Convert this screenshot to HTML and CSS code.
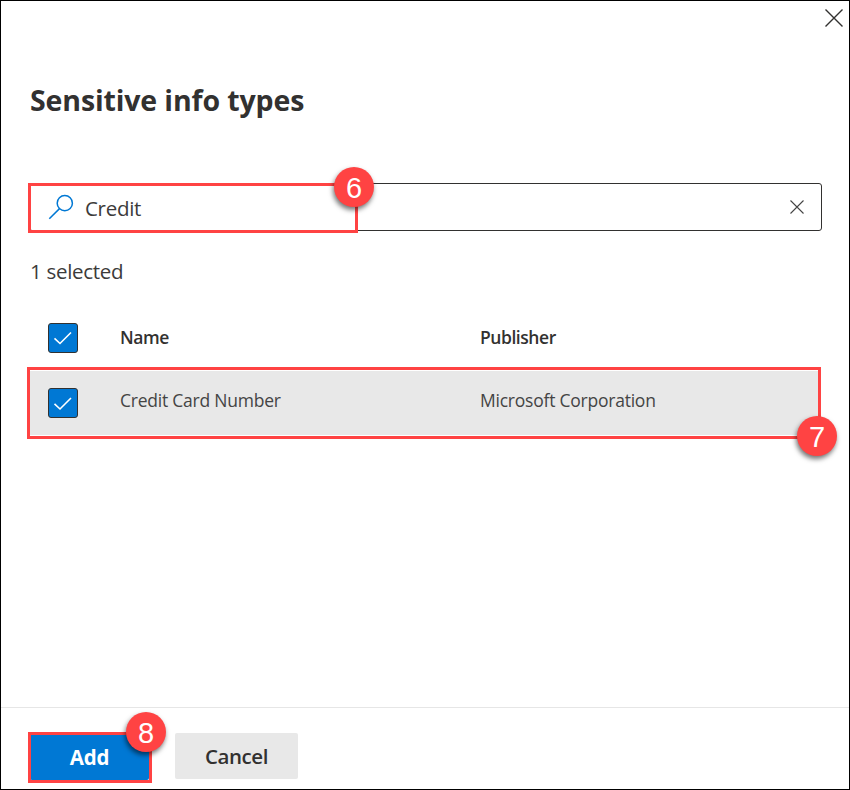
FILE: index.html
```html
<!DOCTYPE html>
<html lang="en">
<head>
<meta charset="utf-8">
<title>Sensitive info types</title>
<link rel="stylesheet" href="styles.css">
</head>
<body>
<main class="panel">
  <header class="panel-top">
    <button class="icon-button" aria-label="Close"><svg width="20" height="20" viewBox="0 0 20 20"><path d="M1.5 1.5 18.5 18.5M18.5 1.5 1.5 18.5" fill="none" stroke="#323130" stroke-width="1.4"/></svg></button>
  </header>
  <h1 class="title"><span>Sensitive info types</span></h1>
  <div class="search">
    <svg class="search-icon" width="26" height="26" viewBox="0 0 26 26"><g fill="none" stroke="#0078d4" stroke-width="1.5"><circle cx="16.8" cy="9.2" r="7.6"/><path d="M11.5 14.6 1.3 24.8"/></g></svg>
    <span class="query">Credit</span>
    <svg class="clear" width="14" height="14" viewBox="0 0 14 14"><path d="M.5.5 13.5 13.5M13.5.5.5 13.5" fill="none" stroke="#444" stroke-width="1.1"/></svg>
    <div class="mark mark-search"><b class="badge badge-6">6</b></div>
  </div>
  <p class="count"><span>1 selected</span></p>
  <section class="table">
    <div class="row head">
      <span class="check"><svg width="28" height="28" viewBox="0 0 28 28"><path d="M5.5 14.3 11 19.5 22 8.5" fill="none" stroke="#fff" stroke-width="1.6"/></svg></span>
      <span class="h-name">Name</span><span class="h-pub">Publisher</span>
    </div>
    <div class="row item">
      <span class="check"><svg width="28" height="28" viewBox="0 0 28 28"><path d="M5.5 14.8 11 20 22 9" fill="none" stroke="#fff" stroke-width="1.6"/></svg></span>
      <span class="c-name">Credit Card Number</span><span class="c-pub">Microsoft Corporation</span>
      <div class="mark mark-row"><b class="badge badge-7">7</b></div>
    </div>
  </section>
  <footer class="footer">
    <div class="add-wrap">
      <button class="button add">Add</button>
      <div class="mark mark-add"><b class="badge badge-8">8</b></div>
    </div>
    <button class="button cancel">Cancel</button>
  </footer>
</main>
</body>
</html>
```
FILE: styles.css
```css
* { box-sizing: border-box; }
body { margin: 0; background: #fff; color: #323130; font-family: "Open Sans", "Noto Sans", sans-serif; }
.panel { width: 850px; height: 790px; border: 1px solid #000; display: flex; flex-direction: column; overflow: hidden; }
.panel-top { height: 34px; padding: 7px 5px 0 0; display: flex; justify-content: flex-end; align-items: flex-start; }
.icon-button { border: 0; padding: 0; background: none; width: 20px; height: 20px; }
.icon-button svg, .check svg { display: block; }
.title { margin: 44px 0 0 29px; height: 42px; font-size: 28.5px; line-height: 42px; letter-spacing: -.13px; font-weight: 700; white-space: nowrap; }
.search { position: relative; margin: 62px 27px 0 28px; height: 48px; border: 1px solid #323130; border-radius: 3px; display: flex; align-items: center; padding: 0 17px 0 18px; }
.query { margin-left: 11px; font-size: 20.5px; line-height: 28px; letter-spacing: -.3px; flex: 1; padding-top: 1px; color: #3c3b3a; }
.count { margin: 26px 0 0 29px; height: 29px; font-size: 20.5px; line-height: 28px; letter-spacing: -.3px; color: #3c3b3a; }
.mark { position: absolute; border: 3px solid #ff4343; }
.mark-search { left: -2px; top: -1px; width: 330px; height: 50px; }
.badge { position: absolute; width: 40px; height: 40px; border-radius: 50%; background: #ff4343; color: #fff; font: 400 29px/42px "Liberation Sans", sans-serif; text-align: center; box-shadow: -1px 3px 5px rgba(0,0,0,.55); }
.badge-6 { left: 303px; top: -19px; }
.table { margin: 33px 28px 0 29px; }
.row { display: grid; grid-template-columns: 90px 360px 1fr; font-size: 17.5px; line-height: 24px; letter-spacing: -.23px; }
.head { height: 52px; padding-top: 4px; font-weight: 600; letter-spacing: -.45px; }
.item { position: relative; height: 64px; background: #e8e8e8; padding-top: 17px; color: #444; }
.check { width: 30px; height: 30px; margin-left: 18px; border: 1px solid #323130; border-radius: 3px; background: #0078d4; }
.head > span:not(.check) { padding-top: 2px; }
.mark-row { left: -3px; top: -4px; width: 794px; height: 72px; }
.badge-7 { left: 767px; top: 46px; }
.footer { margin-top: auto; height: 82px; border-top: 1px solid #e6e6e6; display: flex; align-items: flex-start; padding: 25px 0 0 29px; gap: 25px; }
.add-wrap { position: relative; width: 120px; height: 48px; padding: 1px 0 0; }
.button { border: 0; padding: 0; font: 600 20.5px/46px "Open Sans", "Noto Sans", sans-serif; letter-spacing: -.45px; height: 46px; border-radius: 2px; }
.add { width: 119px; color: #fff; background: #0078d4; display: block; font-weight: 700; letter-spacing: -.2px; }
.cancel { width: 123px; color: #323130; background: #e8e8e8; }
.mark-add { left: -2px; top: -1px; width: 124px; height: 51px; }
.badge-8 { left: 95px; top: -23px; }
```
